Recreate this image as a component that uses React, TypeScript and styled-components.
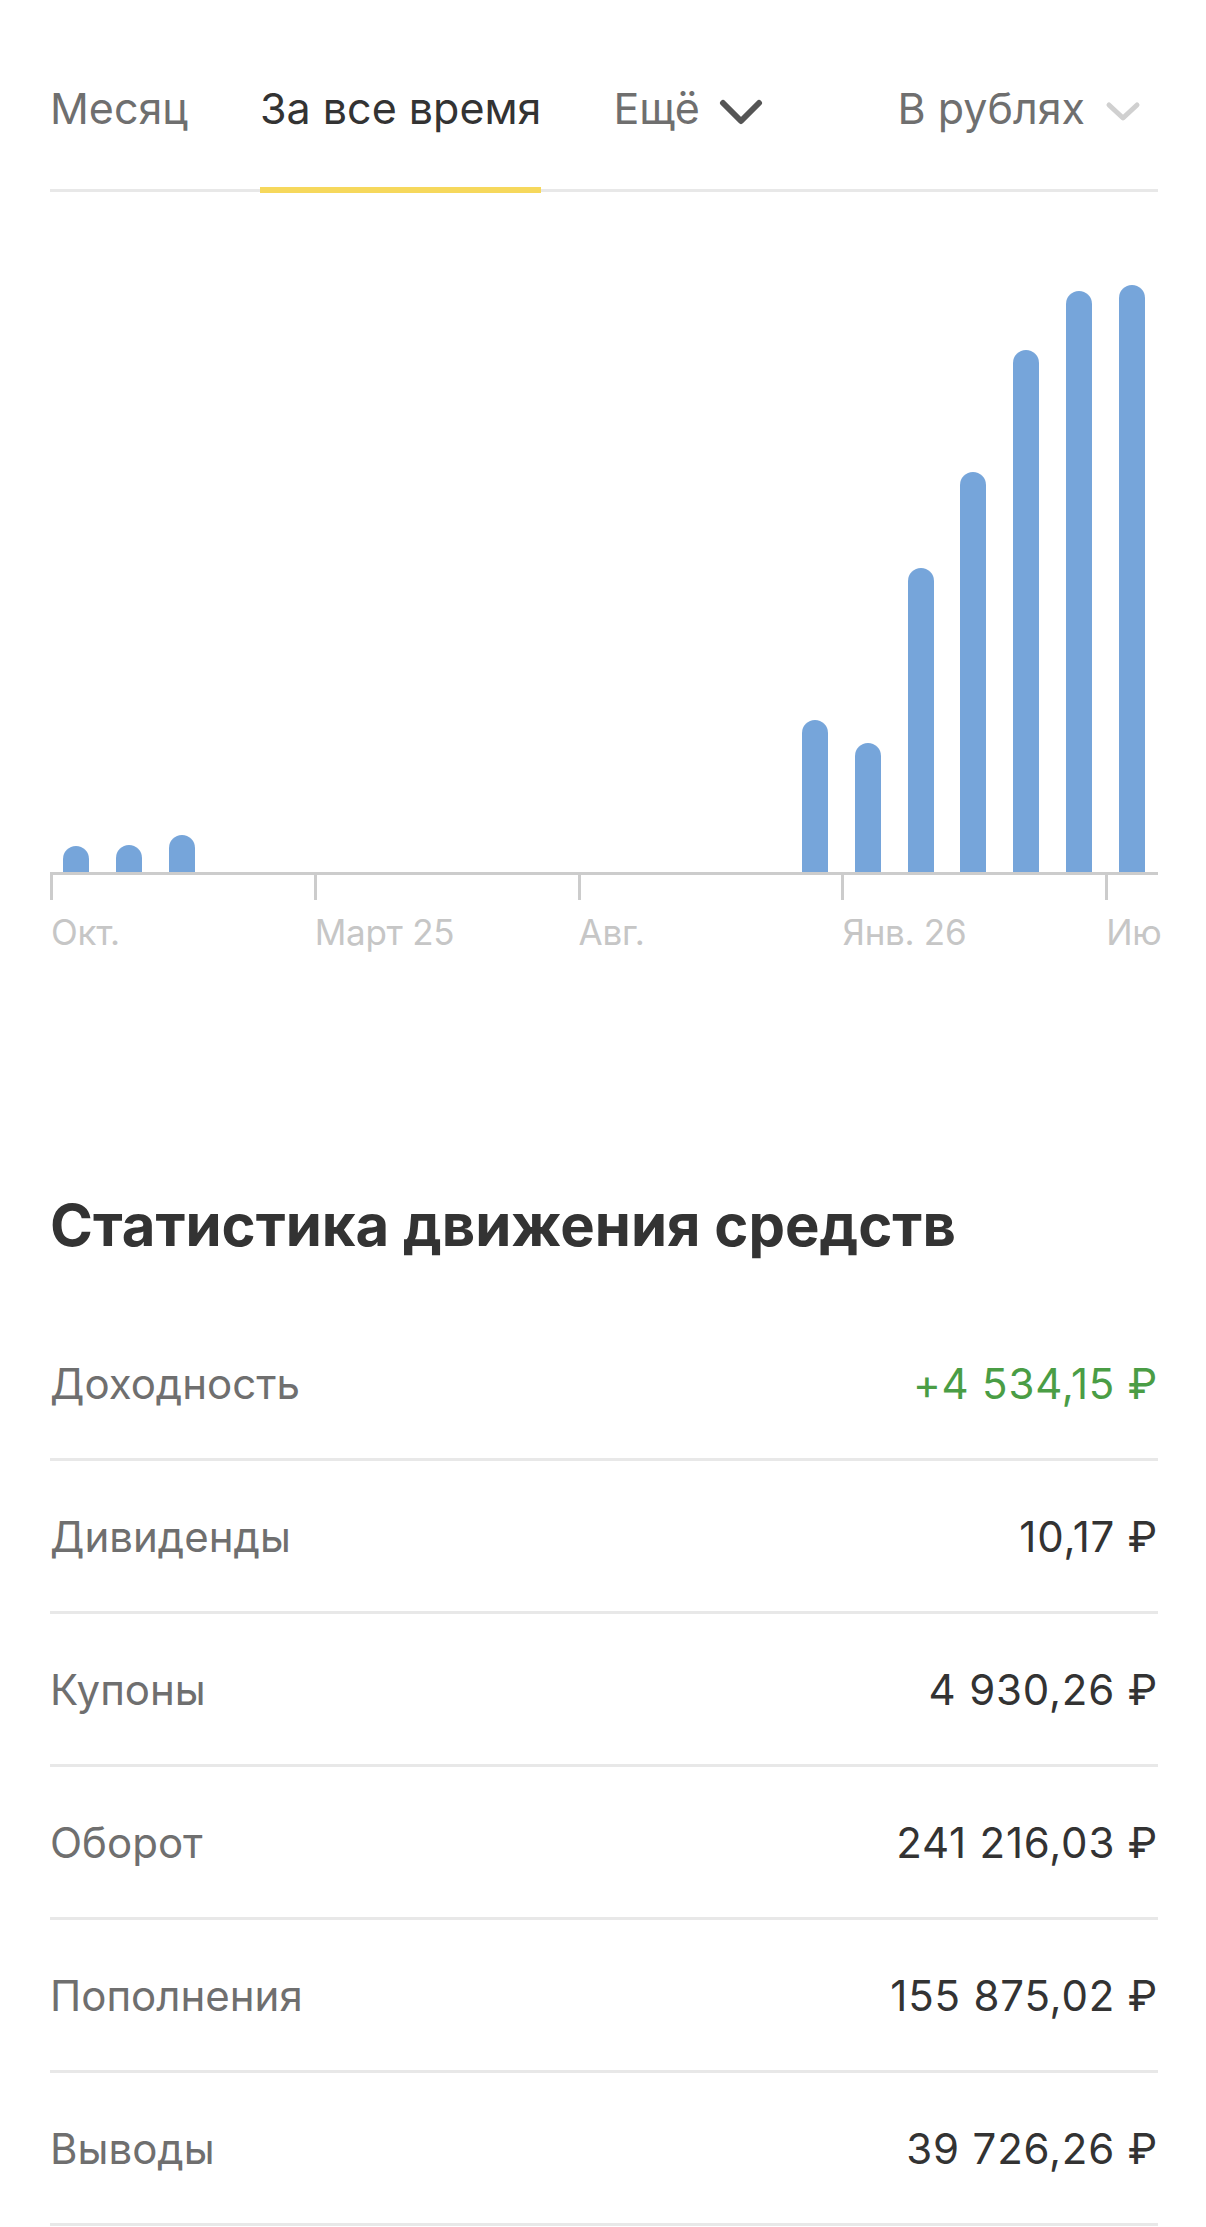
import styled, { createGlobalStyle } from "styled-components";

const GlobalStyle = createGlobalStyle`
  body {
    margin: 0;
    background: #ffffff;
    font-family: Inter, "Noto Sans", "Liberation Sans", sans-serif;
    -webkit-font-smoothing: antialiased;
  }
`;

const Page = styled.div`
  padding: 0 48px 0 50px;
  overflow: hidden;
`;

const TabBar = styled.div`
  display: flex;
  align-items: flex-start;
  padding-top: 83px;
  border-bottom: 3px solid #e8e8e8;
`;

const Tab = styled.div<{ $active?: boolean }>`
  position: relative;
  display: flex;
  align-items: center;
  height: 50px;
  padding-bottom: 56px;
  margin-right: 72px;
  font-size: 43px;
  color: ${(p) => (p.$active ? "#333333" : "#6f6f6f")};
  white-space: nowrap;
  &::after {
    content: "";
    display: ${(p) => (p.$active ? "block" : "none")};
    position: absolute;
    left: 0;
    right: 0;
    bottom: -4px;
    height: 6px;
    background: #f6d85c;
  }
`;

const CurrencyTab = styled(Tab)`
  margin-left: auto;
  margin-right: 17px;
`;

const Chevron = styled.svg<{ $light?: boolean }>`
  margin-left: ${(p) => (p.$light ? "20px" : "19px")};
  margin-top: 8px;
  flex-shrink: 0;
`;

const Chart = styled.div`
  margin-top: 60px;
`;

const Plot = styled.div`
  display: grid;
  grid-template-columns: repeat(21, 1fr);
  align-items: end;
  height: 620px;
  border-bottom: 3px solid #cccccc;
`;

const Bar = styled.div`
  justify-self: center;
  width: 26px;
  border-radius: 13px 13px 0 0;
  background: #76a5da;
`;

const Axis = styled.div`
  display: grid;
  grid-template-columns: repeat(21, 1fr);
`;

const AxisCell = styled.div<{ $span: number }>`
  grid-column: span ${(p) => p.$span};
  min-width: 0;
  white-space: nowrap;
`;

const Tick = styled.div`
  width: 3px;
  height: 25px;
  background: #cccccc;
`;

const AxisLabel = styled.div`
  margin-top: 12px;
  padding-left: 1px;
  font-size: 35px;
  line-height: 40px;
  letter-spacing: -0.3px;
  color: #c6c6c6;
`;

const Heading = styled.h2`
  margin: 239px 0 49px;
  font-size: 58px;
  line-height: 68px;
  font-weight: 700;
  color: #333333;
`;

const Row = styled.div`
  display: flex;
  align-items: center;
  justify-content: space-between;
  height: 150px;
  border-bottom: 3px solid #e8e8e8;
  font-size: 42px;
`;

const RowLabel = styled.span`
  color: #6f6f6f;
`;

const RowValue = styled.span<{ $positive?: boolean }>`
  letter-spacing: 0.8px;
  color: ${(p) => (p.$positive ? "#4a9d45" : "#333333")};
`;

// month slots from Oct 24 to Jun 26, value in px of bar height
const bars: Record<number, number> = {
  0: 26,
  1: 27,
  2: 37,
  14: 152,
  15: 129,
  16: 304,
  17: 400,
  18: 522,
  19: 581,
  20: 587,
};

const axis = [
  { label: "Окт.", span: 5 },
  { label: "Март 25", span: 5 },
  { label: "Авг.", span: 5 },
  { label: "Янв. 26", span: 5 },
  { label: "Ию", span: 1 },
];

const stats = [
  { label: "Доходность", value: "+4 534,15 ₽", positive: true },
  { label: "Дивиденды", value: "10,17 ₽" },
  { label: "Купоны", value: "4 930,26 ₽" },
  { label: "Оборот", value: "241 216,03 ₽" },
  { label: "Пополнения", value: "155 875,02 ₽" },
  { label: "Выводы", value: "39 726,26 ₽" },
];

function App() {
  return (
    <Page>
      <GlobalStyle />
      <TabBar>
        <Tab>Месяц</Tab>
        <Tab $active>За все время</Tab>
        <Tab>
          Ещё
          <Chevron width="44" height="30" viewBox="0 0 44 30">
            <polyline
              points="4,6 22,24 40,6"
              fill="none"
              stroke="#555555"
              strokeWidth="6"
              strokeLinecap="round"
              strokeLinejoin="round"
            />
          </Chevron>
        </Tab>
        <CurrencyTab>
          В рублях
          <Chevron $light width="36" height="22" viewBox="0 0 36 22">
            <polyline
              points="4,4 18,17 32,4"
              fill="none"
              stroke="#d0d0d0"
              strokeWidth="5"
              strokeLinecap="round"
              strokeLinejoin="round"
            />
          </Chevron>
        </CurrencyTab>
      </TabBar>

      <Chart>
        <Plot>
          {Array.from({ length: 21 }).map((_, i) =>
            bars[i] ? (
              <Bar key={i} style={{ height: bars[i] }} />
            ) : (
              <div key={i} />
            )
          )}
        </Plot>
        <Axis>
          {axis.map((a) => (
            <AxisCell key={a.label} $span={a.span}>
              <Tick />
              <AxisLabel>{a.label}</AxisLabel>
            </AxisCell>
          ))}
        </Axis>
      </Chart>

      <Heading>Статистика движения средств</Heading>
      {stats.map((s) => (
        <Row key={s.label}>
          <RowLabel>{s.label}</RowLabel>
          <RowValue $positive={s.positive}>{s.value}</RowValue>
        </Row>
      ))}
    </Page>
  );
}

export default App;
